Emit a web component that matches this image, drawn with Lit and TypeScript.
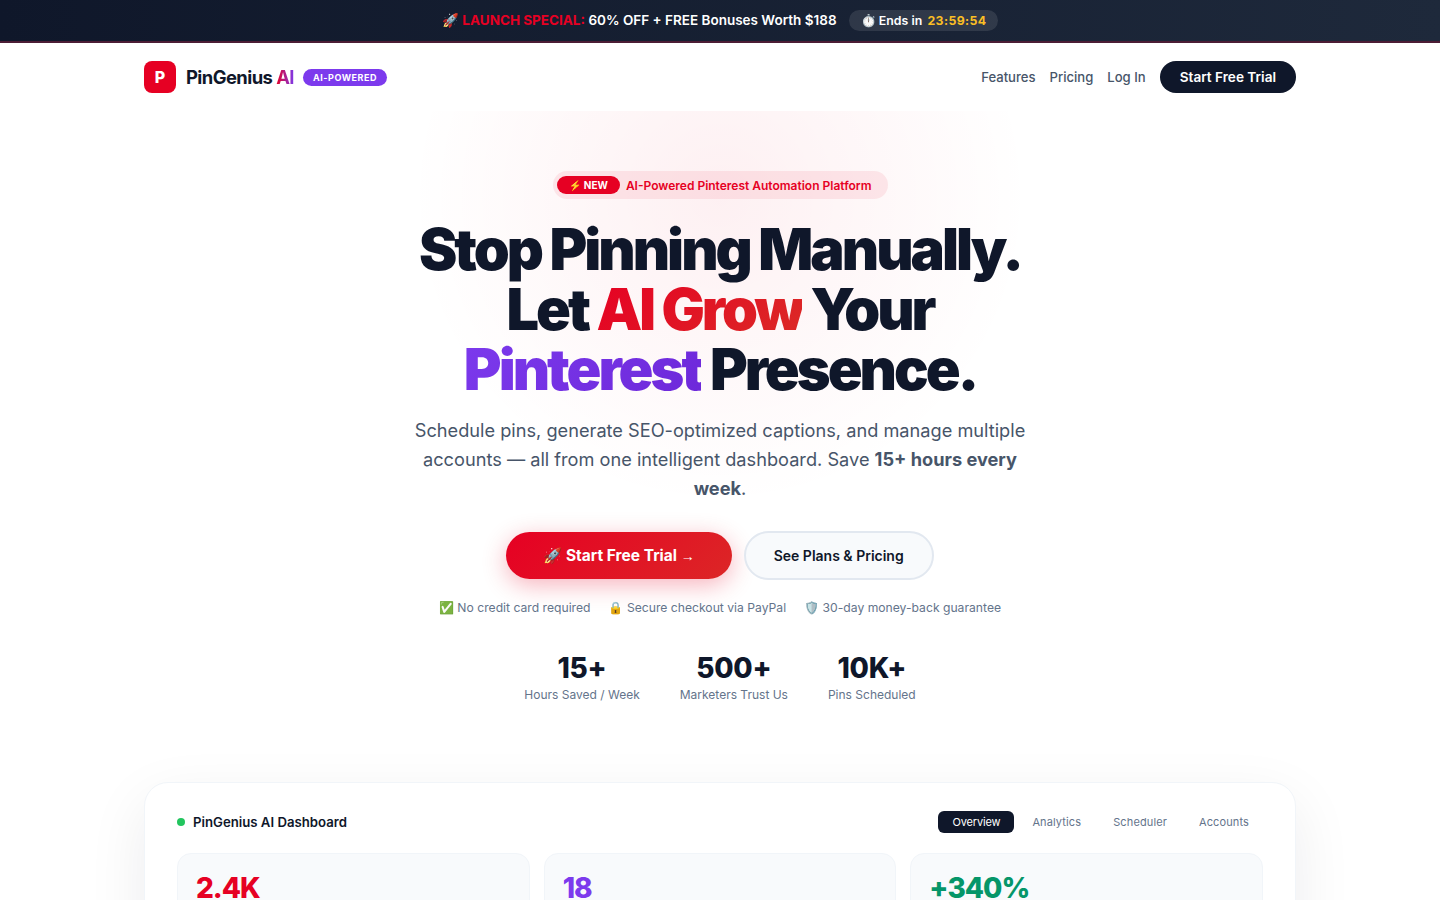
import { css, html, LitElement } from "lit";
import { customElement } from "lit/decorators.js";

@customElement("app-root")
export class AppRoot extends LitElement {
  render() {
    const stats = [
      { value: "15+", label: "Hours Saved / Week" },
      { value: "500+", label: "Marketers Trust Us" },
      { value: "10K+", label: "Pins Scheduled" }
    ];
    const tabs = ["Overview", "Analytics", "Scheduler", "Accounts"];
    const metrics = [
      { value: "2.4K", color: "red" },
      { value: "18", color: "purple" },
      { value: "+340%", color: "green" }
    ];

    return html`
      <div class="promo">
        <span>🚀 <b class="promo-red">LAUNCH SPECIAL:</b> 60% OFF + FREE Bonuses Worth $188</span>
        <span class="timer">⏱️ Ends in <b class="clock">23:59:54</b></span>
      </div>

      <nav class="nav">
        <div class="brand">
          <span class="logo">P</span>
          <span class="brand-name">PinGenius <span class="brand-ai">AI</span></span>
          <span class="brand-tag">AI-POWERED</span>
        </div>
        <div class="links">
          <a>Features</a>
          <a>Pricing</a>
          <a>Log In</a>
          <a class="nav-cta">Start Free Trial</a>
        </div>
      </nav>

      <section class="hero">
        <div class="glow"></div>
        <div class="badge"><span class="badge-new">⚡ NEW</span> AI-Powered Pinterest Automation Platform</div>
        <h1>Stop Pinning Manually.<br />Let <span class="grad-red">AI Grow</span> Your<br /><span class="grad-purple">Pinterest</span> Presence.</h1>
        <p class="lead">Schedule pins, generate SEO-optimized captions, and manage multiple accounts — all from one intelligent dashboard. Save <strong>15+ hours every week</strong>.</p>
        <div class="actions">
          <a class="btn-primary">🚀 Start Free Trial <span class="arrow">→</span></a>
          <a class="btn-secondary">See Plans &amp; Pricing</a>
        </div>
        <div class="trust">
          <span>✅ No credit card required</span>
          <span>🔒 Secure checkout via PayPal</span>
          <span>🛡️ 30-day money-back guarantee</span>
        </div>
        <div class="stats">
          ${stats.map(
            (s) => html`<div class="stat">
              <div class="stat-value">${s.value}</div>
              <div class="stat-label">${s.label}</div>
            </div>`
          )}
        </div>
      </section>

      <section class="dash">
        <div class="dash-head">
          <div class="dash-title"><i class="dot"></i>PinGenius AI Dashboard</div>
          <div class="tabs">
            ${tabs.map((t, i) => html`<span class="tab ${i === 0 ? "active" : ""}">${t}</span>`)}
          </div>
        </div>
        <div class="metrics">
          ${metrics.map((m) => html`<div class="metric"><div class="metric-value ${m.color}">${m.value}</div></div>`)}
        </div>
      </section>
    `;
  }

  static styles = css`
    :host {
      display: block;
      height: 900px;
      overflow: hidden;
      background: #fff;
      font-family: Inter, "Noto Sans", sans-serif;
      color: #0f172a;
    }

    .promo {
      height: 40px;
      padding-bottom: 1px;
      display: flex;
      align-items: center;
      justify-content: center;
      gap: 12px;
      background: linear-gradient(90deg, #0f172a, #1e293b);
      border-bottom: 2px solid #4c1d35;
      color: #fff;
      font-size: 13.5px;
      font-weight: 600;
    }

    .promo-red {
      color: #e60023;
      font-weight: 700;
    }

    .timer {
      height: 21px;
      line-height: 21px;
      padding: 0 11.5px 0 12px;
      border-radius: 999px;
      background: rgba(255, 255, 255, 0.1);
      font-size: 12.3px;
      letter-spacing: 0.05px;
    }

    .clock {
      color: #fbbf24;
      font-weight: 700;
      letter-spacing: 0.4px;
      margin-left: 2px;
    }

    .nav {
      width: 1152px;
      height: 68px;
      margin: 0 auto;
      display: flex;
      align-items: center;
      justify-content: space-between;
    }

    .brand {
      display: flex;
      align-items: center;
    }

    .logo {
      width: 32px;
      height: 32px;
      border-radius: 8px;
      background: #e60023;
      color: #fff;
      display: flex;
      align-items: center;
      justify-content: center;
      font-size: 16px;
      font-weight: 800;
    }

    .brand-name {
      margin-left: 10px;
      font-size: 18.4px;
      font-weight: 700;
      letter-spacing: -0.55px;
    }

    .brand-ai {
      background: linear-gradient(90deg, #e60023, #7c3aed);
      -webkit-background-clip: text;
      background-clip: text;
      color: transparent;
    }

    .brand-tag {
      margin-left: 9px;
      padding: 0 10px;
      height: 17px;
      line-height: 17px;
      border-radius: 999px;
      background: #7c3aed;
      color: #fff;
      font-size: 9px;
      font-weight: 700;
      letter-spacing: 0.55px;
    }

    .links {
      display: flex;
      align-items: center;
      gap: 14px;
      font-size: 13.1px;
      font-weight: 500;
      color: #475569;
    }

    .nav-cta {
      height: 32px;
      line-height: 32px;
      padding: 0 20px;
      border-radius: 999px;
      background: #0f172a;
      color: #fff;
      font-size: 13.6px;
      font-weight: 600;
    }

    .hero {
      position: relative;
      display: flex;
      flex-direction: column;
      align-items: center;
      padding-top: 60px;
      text-align: center;
    }

    .glow {
      position: absolute;
      top: 0;
      left: 50%;
      width: 640px;
      height: 420px;
      transform: translateX(-50%);
      background: radial-gradient(circle 310px at 50% 85px, rgba(230, 0, 35, 0.06), rgba(230, 0, 35, 0));
      pointer-events: none;
    }

    .hero > *:not(.glow) {
      position: relative;
    }

    .badge {
      display: flex;
      align-items: center;
      gap: 6px;
      height: 28px;
      margin-left: 1px;
      padding: 0 16px 0 4px;
      border-radius: 999px;
      background: rgba(230, 0, 35, 0.08);
      color: #e60023;
      font-size: 12px;
      font-weight: 600;
    }

    .badge-new {
      height: 18px;
      line-height: 18px;
      padding: 0 12px;
      border-radius: 999px;
      background: #e60023;
      color: #fff;
      font-size: 10px;
      font-weight: 700;
    }

    h1 {
      margin: 19.5px 0 0;
      font-size: 57.6px;
      line-height: 1.05;
      font-weight: 900;
      letter-spacing: -3px;
      color: #0f172a;
    }

    .grad-red,
    .grad-purple {
      -webkit-background-clip: text;
      background-clip: text;
      color: transparent;
    }

    .grad-red {
      background-image: linear-gradient(135deg, #e60023, #dc2626 90%);
    }

    .grad-purple {
      background-image: linear-gradient(135deg, #7c3aed, #6d28d9);
    }

    .red {
      color: #e60023;
    }

    .purple {
      color: #7c3aed;
    }

    .green {
      color: #059669;
    }

    .lead {
      width: 620px;
      margin: 16px 0 0;
      font-size: 18.2px;
      line-height: 29px;
      color: #475569;
    }

    .lead strong {
      font-weight: 700;
    }

    .actions {
      display: flex;
      align-items: center;
      gap: 12px;
      margin-top: 28.5px;
    }

    .btn-primary {
      height: 47px;
      line-height: 47px;
      padding: 0 37px;
      border-radius: 999px;
      background: linear-gradient(135deg, #e60023, #dc2626);
      color: #fff;
      font-size: 15.5px;
      font-weight: 700;
      box-shadow: 0 6px 24px rgba(230, 0, 35, 0.3);
    }

    .arrow {
      font-family: "Liberation Sans", sans-serif;
      font-weight: 400;
      font-size: 14px;
    }

    .btn-secondary {
      height: 45px;
      line-height: 45px;
      padding: 0 28px;
      border: 2px solid #e2e8f0;
      border-radius: 999px;
      background: #f8fafc;
      color: #0f172a;
      font-size: 14px;
      font-weight: 600;
    }

    .trust {
      display: flex;
      gap: 18px;
      margin-top: 20px;
      font-size: 12.16px;
      color: #64748b;
    }

    .stats {
      display: flex;
      gap: 40px;
      margin-top: 35px;
    }

    .stat-value {
      font-size: 28px;
      line-height: 36px;
      font-weight: 800;
      letter-spacing: -0.3px;
    }

    .stat-label {
      margin-top: 1px;
      font-size: 12px;
      color: #64748b;
    }

    .dash {
      box-sizing: border-box;
      width: 1152px;
      margin: 80px auto 0;
      padding: 28px 32px;
      border: 1px solid #f1f5f9;
      border-radius: 24px;
      background: #fff;
      box-shadow: 0 20px 60px rgba(15, 23, 42, 0.08);
    }

    .dash-head {
      display: flex;
      align-items: center;
      justify-content: space-between;
    }

    .dash-title {
      display: flex;
      align-items: center;
      gap: 8px;
      font-size: 13.2px;
      font-weight: 600;
    }

    .dot {
      width: 8px;
      height: 8px;
      border-radius: 50%;
      background: #22c55e;
    }

    .tabs {
      display: flex;
      gap: 4px;
      font-size: 11px;
      letter-spacing: 0.12px;
      color: #64748b;
    }

    .tab {
      height: 22px;
      line-height: 22px;
      padding: 0 14px;
      border-radius: 6px;
    }

    .tab.active {
      background: #0f172a;
      color: #fff;
      letter-spacing: -0.15px;
    }

    .metrics {
      display: grid;
      grid-template-columns: repeat(3, 1fr);
      gap: 14px;
      margin-top: 20px;
    }

    .metric {
      height: 120px;
      box-sizing: border-box;
      padding: 18px;
      border: 1px solid #f1f5f9;
      border-radius: 14px;
      background: #f8fafc;
      text-align: left;
    }

    .metric-value {
      font-size: 28px;
      line-height: 32px;
      font-weight: 800;
      letter-spacing: -1px;
    }
  `;
}
